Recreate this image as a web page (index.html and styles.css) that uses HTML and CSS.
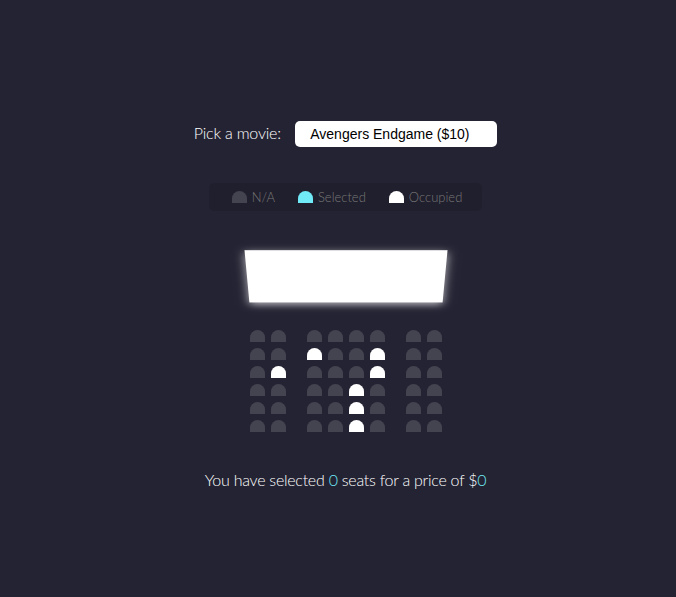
FILE: index.html
```html
<!DOCTYPE html>
<html lang="en">
<head>
<meta charset="UTF-8">
<title>Movie Seat Booking</title>
<link rel="stylesheet" href="styles.css">
</head>
<body>
  <div class="movie-container">
    <label>Pick a movie:</label>
    <select id="movie">
      <option value="10">Avengers Endgame ($10)</option>
      <option value="12">Joker ($12)</option>
      <option value="8">Toy Story 4 ($8)</option>
      <option value="9">The Lion King ($9)</option>
    </select>
  </div>

  <ul class="showcase">
    <li><div class="seat"></div><small>N/A</small></li>
    <li><div class="seat selected"></div><small>Selected</small></li>
    <li><div class="seat occupied"></div><small>Occupied</small></li>
  </ul>

  <div class="container">
    <div class="screen"></div>
    <div class="row">
      <div class="seat"></div><div class="seat"></div><div class="seat"></div><div class="seat"></div>
      <div class="seat"></div><div class="seat"></div><div class="seat"></div><div class="seat"></div>
    </div>
    <div class="row">
      <div class="seat"></div><div class="seat"></div><div class="seat occupied"></div><div class="seat"></div>
      <div class="seat"></div><div class="seat occupied"></div><div class="seat"></div><div class="seat"></div>
    </div>
    <div class="row">
      <div class="seat"></div><div class="seat occupied"></div><div class="seat"></div><div class="seat"></div>
      <div class="seat"></div><div class="seat occupied"></div><div class="seat"></div><div class="seat"></div>
    </div>
    <div class="row">
      <div class="seat"></div><div class="seat"></div><div class="seat"></div><div class="seat"></div>
      <div class="seat occupied"></div><div class="seat"></div><div class="seat"></div><div class="seat"></div>
    </div>
    <div class="row">
      <div class="seat"></div><div class="seat"></div><div class="seat"></div><div class="seat"></div>
      <div class="seat occupied"></div><div class="seat"></div><div class="seat"></div><div class="seat"></div>
    </div>
    <div class="row">
      <div class="seat"></div><div class="seat"></div><div class="seat"></div><div class="seat"></div>
      <div class="seat occupied"></div><div class="seat"></div><div class="seat"></div><div class="seat"></div>
    </div>
  </div>

  <p class="text">
    You have selected <span id="count">0</span> seats for a price of $<span id="total">0</span>
  </p>
</body>
</html>
```

FILE: styles.css
```css
* {
  box-sizing: border-box;
}

body {
  background-color: #242333;
  color: #fff;
  display: flex;
  flex-direction: column;
  align-items: center;
  justify-content: center;
  height: 100vh;
  font-family: Lato, "Noto Sans", sans-serif;
  font-weight: 300;
  font-size: 16px;
  margin: 0;
  padding: 0 0 2px 15px;
}

.movie-container {
  margin: 20px 0;
}

.movie-container label {
  letter-spacing: -0.2px;
}

.movie-container select {
  background-color: #fff;
  color: #000;
  border: 0;
  border-radius: 5px;
  font-family: "Liberation Sans", Arial, sans-serif;
  font-weight: 400;
  letter-spacing: 0;
  font-size: 14px;
  margin-left: 10px;
  padding: 5px 27px 5px 15px;
  -webkit-appearance: none;
  appearance: none;
}

.container {
  perspective: 1000px;
  margin-bottom: 30px;
}

.seat {
  background-color: #444451;
  height: 12px;
  width: 15px;
  margin: 3px;
  border-top-left-radius: 10px;
  border-top-right-radius: 10px;
}

.seat.selected {
  background-color: #6feaf6;
}

.seat.occupied {
  background-color: #fff;
}

.seat:nth-of-type(2) {
  margin-right: 18px;
}

.seat:nth-last-of-type(2) {
  margin-left: 18px;
}

.showcase {
  background: rgba(0, 0, 0, 0.1);
  padding: 5px 10px;
  border-radius: 5px;
  color: #777;
  list-style-type: none;
  display: flex;
  justify-content: space-between;
  margin: 16px 0;
}

.showcase li {
  display: flex;
  align-items: center;
  justify-content: center;
  margin: 0 10px;
}

.showcase li small {
  margin-left: 2px;
  font-size: 13px;
}

.row {
  display: flex;
}

.screen {
  background-color: #fff;
  height: 70px;
  width: 100%;
  margin: 15px 0;
  transform: rotateX(-45deg);
  box-shadow: 0 3px 10px rgba(255, 255, 255, 0.7);
}

p.text {
  margin: 5px 0;
  letter-spacing: -0.25px;
}

p.text span {
  color: #6feaf6;
}
```
